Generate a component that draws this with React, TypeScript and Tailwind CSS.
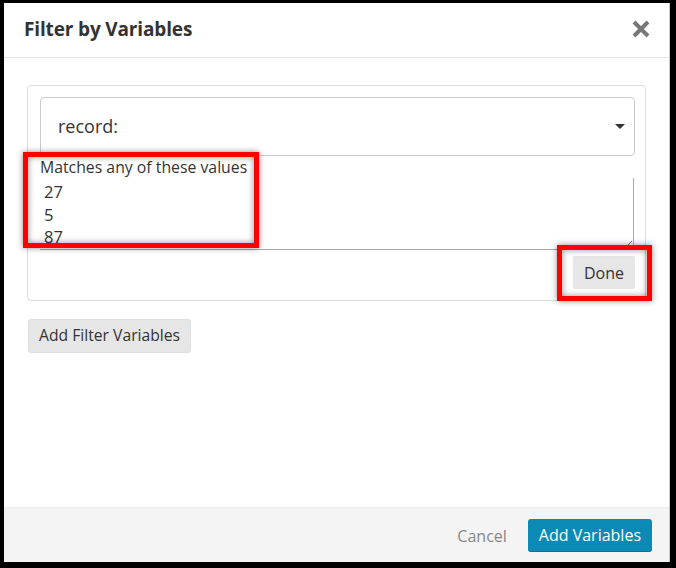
import React from "react";

const font = { fontFamily: '"Open Sans", "Noto Sans", sans-serif' };

function CloseIcon() {
  return (
    <svg width="20" height="20" viewBox="0 0 20 20" aria-hidden="true">
      <path d="M3 3 L17 17 M17 3 L3 17" stroke="#777777" strokeWidth="4" strokeLinecap="butt" />
    </svg>
  );
}

function Caret() {
  return (
    <svg width="10" height="6" viewBox="0 0 10 6" aria-hidden="true">
      <path d="M0 0 H10 L5 5 Z" fill="#333333" />
    </svg>
  );
}

export default function App() {
  return (
    <div
      className="relative w-[676px] h-[568px] bg-black pt-[3px] pl-[4px] pr-[6px] pb-[6px]"
      style={font}
    >
      <div className="flex flex-col h-full bg-white border-r border-[#c8c8c8]">
        {/* header */}
        <div className="flex items-center justify-between h-[55px] border-b border-[#e5e5e5] pl-[20px] pr-[17px] pb-[2px]">
          <h1 className="text-[19px] font-bold text-[#333] tracking-[-0.15px]">Filter by Variables</h1>
          <button className="flex items-center justify-center w-[22px] h-[22px]">
            <CloseIcon />
          </button>
        </div>

        {/* body */}
        <div className="flex-1 px-[23px] pt-[27px]">
          <div className="border border-[#dcdcdc] rounded-[4px] pt-[11px] pl-[12px] pr-[10px] pb-[11px]">
            <div className="flex items-center justify-between h-[59px] border border-[#cccccc] rounded-[4px] pl-[17px] pr-[9px]">
              <span className="text-[18px] text-[#333]">record:</span>
              <Caret />
            </div>
            <div className="text-[15.8px] leading-[22px] text-[#333]">Matches any of these values</div>
            <textarea
              readOnly
              value={"27\n5\n87"}
              className="block w-[594px] h-[72px] border-r border-b border-[#a9a9a9] pl-[4px] pt-[3px] text-[16.5px] leading-[22.5px] text-[#333] outline-none overflow-hidden"
              style={font}
            />
            <div className="flex justify-end pt-[6px]">
              <button className="h-[33px] px-[11px] bg-[#e6e6e6] rounded-[2px] text-[16px] text-[#333]">Done</button>
            </div>
          </div>

          <button className="mt-[18px] ml-[1px] h-[34px] px-[10px] bg-[#e6e6e6] rounded-[3px] border border-[#dedede] text-[15.7px] text-[#333]">
            Add Filter Variables
          </button>
        </div>

        {/* footer */}
        <div className="flex items-center justify-end gap-[21px] h-[55px] bg-[#f4f4f4] border-t border-[#ededed] pr-[17px] pt-[1px]">
          <span className="text-[16px] text-[#888]">Cancel</span>
          <button className="h-[33px] px-[11px] bg-[#0a8ab4] border-b border-[#06739a] rounded-[3px] text-[16px] text-white">
            Add Variables
          </button>
        </div>
      </div>

      {/* annotation outlines */}
      <div className="absolute left-[23px] top-[152px] w-[236px] h-[96px] border-[5px] border-[#ff0000] shadow-[0_0_6px_rgba(0,0,0,0.45),inset_0_0_6px_rgba(0,0,0,0.45)]" />
      <div className="absolute left-[557px] top-[245px] w-[95px] h-[56px] border-[5px] border-[#ff0000] shadow-[0_0_6px_rgba(0,0,0,0.45),inset_0_0_6px_rgba(0,0,0,0.45)]" />
    </div>
  );
}
